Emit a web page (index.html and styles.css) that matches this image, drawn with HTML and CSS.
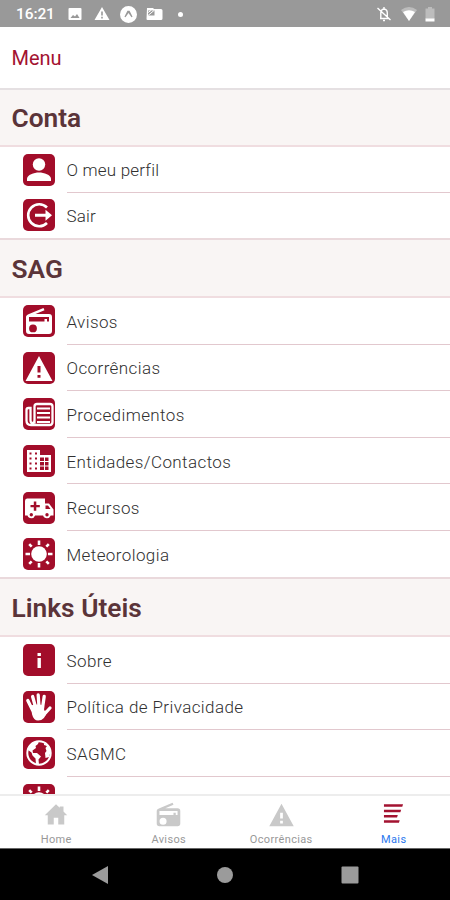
FILE: index.html
```html
<!DOCTYPE html>
<html lang="pt">
<head>
<meta charset="utf-8">
<title>Menu</title>
<link rel="stylesheet" href="styles.css">
</head>
<body>
<svg class="defs" aria-hidden="true">
  <symbol id="person" viewBox="0 0 32 32"><circle cx="16" cy="10.5" r="6.2"/><path d="M4 27v-2.2c0-4 7-6.3 12-6.3s12 2.3 12 6.3V27z"/></symbol>
  <symbol id="exit" viewBox="0 0 32 32"><path d="M24 8.500A11 11 0 1 0 24 24" fill="none" stroke="currentColor" stroke-width="2.600"/><path d="M12 14.800h10.500v-4l6.500 5.500-6.500 5.500v-4H12z"/></symbol>
  <symbol id="radio" viewBox="0 0 32 32"><path fill-rule="evenodd" d="M6 9 20.500 3l1 2.300L12.500 9H26a3 3 0 0 1 3 3V26a3 3 0 0 1-3 3H6a3 3 0 0 1-3-3V12c0-1.500 1.500-2.500 3-3zM6 12v4.500h15.500V14H24v2.500h2V12zM10 19.500a3.900 3.900 0 1 0 0 7.800 3.900 3.900 0 0 0 0-7.800z"/></symbol>
  <symbol id="warning" viewBox="0 0 32 32"><path fill-rule="evenodd" d="M16 4 29.500 29h-27zM14.500 14v6.500h3V14zM14.500 23v2.800h3V23z"/></symbol>
  <symbol id="news" viewBox="0 0 32 32"><g fill="none" stroke="currentColor"><path d="M11.500 25.500V8.500q0-2.500 2.500-2.500h13q2.500 0 2.500 2.500V24q0 3-3 3H8q-4.500 0-4.500-4.500V12q0-2 2-2h2v12q0 3 2 3t2-3" stroke-width="2.300"/><path d="M14 10.500h13M14 15h13M14 19.500h13M14 24h13" stroke-width="2"/></g></symbol>
  <symbol id="building" viewBox="0 0 32 32"><path fill-rule="evenodd" d="M4 5h13v5h11v17H4zM6.500 7.500v2h2v-2zM12 7.500v2h2v-2zM6.500 12.500v2h2v-2zM12 12.500v2h2v-2zM6.500 17.500v2h2v-2zM12 17.500v2h2v-2zM6.500 22.500v2h2v-2zM12 22.500v2h2v-2zM17 12.500v3.500h4v-3.500zM22 12.500v3.500h3.500v-3.500zM17 17v3.500h4V17zM22 17v3.500h3.500V17zM17 21.500v3.500h4v-3.500zM22 21.500v3.500h3.500v-3.500z"/></symbol>
  <symbol id="ambulance" viewBox="0 0 32 32"><path fill-rule="evenodd" d="M4 6.500h18v5h4l4.500 6v6h-2.800a4 4 0 0 1-7.600 0h-8a4 4 0 0 1-7.600 0H2V9q0-2.500 2-2.500zM10.800 9.500V13H7.500v2.300h3.300v3.500h2.500v-3.500h3.500V13h-3.500V9.500zM22.500 13.500V17h5l-2.500-3.500zM8.300 21a1.600 1.600 0 1 0 0 3.400 1.600 1.600 0 0 0 0-3.400zM24 21a1.600 1.600 0 1 0 0 3.400 1.600 1.600 0 0 0 0-3.400z"/></symbol>
  <symbol id="sun" viewBox="0 0 32 32"><circle cx="16" cy="16" r="7.800"/><path d="M16 2.500v4.500M16 25v4.500M2.500 16H7M25 16h4.500M6.200 6.200l2.500 2.500M23.300 23.300l2.500 2.500M6.200 25.800l2.500-2.500M23.300 8.700l2.500-2.500" stroke="currentColor" stroke-width="2.600"/></symbol>
  <symbol id="info" viewBox="0 0 32 32"><path d="M14.500 9h3.400v3h-3.400zM14.500 14h3.400v10h-3.400z"/></symbol>
  <symbol id="hand" viewBox="0 0 32 32"><g fill="none" stroke="currentColor" stroke-width="3.300" stroke-linecap="round"><path d="M9.500 19 4.800 9.500M12.500 16 9.600 5.500M16 16 15.200 4M19.500 17l1.700-11.500M21.500 23l5.500-6"/></g><path d="M7.500 14.500q7-2 13.600 0v5l3 .5q-2 9.500-9 9.500-4.500 0-6-6z"/></symbol>
  <symbol id="globe" viewBox="0 0 32 32"><circle cx="16" cy="16" r="11.700" fill="none" stroke="currentColor" stroke-width="2"/><path d="M5 13q2-8 11-9l-1 3-2.500 2 .5 2-3.500 2.500.5 2.500h4l4 3.500-2.500 3 .5 5h-3l-.5-6-3-3-1-3zM21 6q6 3 6.500 9l-1.500 5-3.500 1-.5-5 1.500-2-1-3 1.500-2-3-1z"/></symbol>
  <symbol id="home" viewBox="0 0 32 32"><path d="M1 17.500 16 3l5 4.800V6h5v6.600l5 4.900h-4V30h-8v-9h-6v9H5V17.500z"/></symbol>
</svg>
<div class="screen">
  <div class="status">
    <div class="status-left">
      <span class="clock">16:21</span>
      <svg class="s-img" viewBox="0 0 14 14"><path fill-rule="evenodd" d="M1.500 1h11q1 0 1 1v10q0 1-1 1h-11q-1 0-1-1V2q0-1 1-1zM2.500 11h9L9 7l-2 2.500L5 8z"/></svg>
      <svg class="s-warn" viewBox="0 0 16 14"><path fill-rule="evenodd" d="M8 0l7.500 13H.5zM7.200 4.500v4h1.600v-4zM7.200 9.800v1.600h1.600V9.800z"/></svg>
      <svg class="s-expo" viewBox="0 0 16 16"><path fill-rule="evenodd" d="M8 0a8 8 0 1 1 0 16A8 8 0 0 1 8 0zM7 4.500 4.200 10l1 .7L8 6.500l2.800 4.200 1-.7L9 4.500z"/></svg>
      <svg class="s-card" viewBox="0 0 17 14"><path fill-rule="evenodd" d="M1 1h6l1 1h7q1.500 0 1.500 1.500v8q0 1.500-1.500 1.500H1.500Q.5 13 .5 12zM2 3.500v5h6.500v-5z"/><path d="m2 8.500 6-5M2 5.500 5 3.500" stroke="#fff"/></svg>
      <span class="dot"></span>
    </div>
    <div class="status-right">
      <svg class="s-bell" viewBox="0 0 16 16"><path d="M4 12.500h9M4.800 12V7q0-3.500 3.200-4 3.300.5 3.300 4v5M8 1v2M7 14.500h2M1.500 2l13 12" fill="none" stroke="#fff" stroke-width="1.400"/></svg>
      <svg class="s-wifi" viewBox="0 0 16 14"><path opacity=".35" d="M0 3q8-6 16 0L8 14z"/><path d="M2 5q6-3.500 12 0l-6 9z"/></svg>
      <svg class="s-bat" viewBox="0 0 10 15"><path opacity=".35" d="M3 0h4v1.500h2.500V12h-9V1.500H3z"/><path d="M.5 11.500h9v3h-9z"/></svg>
    </div>
  </div>
  <header class="title">Menu</header>
  <main class="menu">
    <h2 class="h-conta">Conta</h2>
    <ul class="list-conta">
      <li><svg class="tile"><use href="#person"/></svg><span class="label tight">O meu perfil</span></li>
      <li><svg class="tile"><use href="#exit"/></svg><span class="label tight">Sair</span></li>
    </ul>
    <h2>SAG</h2>
    <ul>
      <li><svg class="tile"><use href="#radio"/></svg><span class="label">Avisos</span></li>
      <li><svg class="tile"><use href="#warning"/></svg><span class="label">Ocorrências</span></li>
      <li><svg class="tile"><use href="#news"/></svg><span class="label">Procedimentos</span></li>
      <li><svg class="tile"><use href="#building"/></svg><span class="label">Entidades/Contactos</span></li>
      <li><svg class="tile"><use href="#ambulance"/></svg><span class="label">Recursos</span></li>
      <li><svg class="tile"><use href="#sun"/></svg><span class="label">Meteorologia</span></li>
    </ul>
    <h2>Links Úteis</h2>
    <ul>
      <li><svg class="tile"><use href="#info"/></svg><span class="label">Sobre</span></li>
      <li><svg class="tile"><use href="#hand"/></svg><span class="label">Política de Privacidade</span></li>
      <li><svg class="tile"><use href="#globe"/></svg><span class="label">SAGMC</span></li>
      <li><svg class="tile"><use href="#sun"/></svg><span class="label"></span></li>
    </ul>
  </main>
  <nav class="tabs">
    <div class="tab"><svg class="t-home"><use href="#home"/></svg><span>Home</span></div>
    <div class="tab"><svg class="t-radio"><use href="#radio"/></svg><span>Avisos</span></div>
    <div class="tab"><svg class="t-warn"><use href="#warning"/></svg><span>Ocorrências</span></div>
    <div class="tab active"><svg class="t-more" viewBox="0 0 22 22"><path d="M1 1.200h20l-.8 2.800H1zM1 7h18l-.8 2.600H1zM1 12.500h14.500l-.8 2.600H1zM1 18h16.500l-.8 2.600H1z"/></svg><span>Mais</span></div>
  </nav>
  <div class="system">
    <svg viewBox="0 0 18 20"><path d="M17 1v18L1 10z"/></svg>
    <svg viewBox="0 0 18 20"><circle cx="9" cy="10" r="8"/></svg>
    <svg viewBox="0 0 18 20"><rect x=".5" y="1.500" width="17" height="17" rx="1"/></svg>
  </div>
</div>
</body>
</html>
```
FILE: styles.css
```css
* { box-sizing: border-box; }
body { margin: 0; font-family: Roboto, "Liberation Sans", sans-serif; background: #fff; }
.defs { display: none; }
svg { display: block; fill: currentColor; flex: none; }
.screen { width: 450px; height: 900px; display: flex; flex-direction: column; overflow: hidden; }

.status { height: 27px; flex: none; background: #999; color: #fff; display: flex; justify-content: space-between; align-items: center; padding: 1px 15px 0 16px; }
.status-left, .status-right { display: flex; align-items: center; }
.clock { width: 52px; font-size: 15.5px; font-weight: 500; line-height: 26px; letter-spacing: -.1px; }
.s-img { width: 14px; height: 14px; margin-right: 12px; }
.s-warn { width: 16px; height: 14px; margin-right: 10px; }
.s-expo { width: 17px; height: 17px; margin-right: 9px; }
.s-card { width: 17px; height: 14px; margin-right: 15px; }
.dot { width: 5px; height: 5px; border-radius: 50%; background: #fff; }
.s-bell { width: 16px; height: 16px; margin-right: 9px; }
.s-wifi { width: 16px; height: 14px; margin-right: 8px; }
.s-bat { width: 10px; height: 15px; }

.title { height: 61px; flex: none; padding-left: 11.5px; font-size: 20px; line-height: 63px; color: #a31230; }

.menu { flex: 1; min-height: 0; overflow: hidden; }
h2 { margin: 0; height: 60px; padding-left: 11.5px; background: #f9f5f4; border-top: 2px solid #ead9dc; border-bottom: 2px solid #f0dde0; font-size: 26.3px; line-height: 59px; font-weight: 600; color: #5b3439; }
.h-conta { height: 59px; border-top-color: #e5e0e2; line-height: 56px; }
ul { margin: 0; padding: 0; list-style: none; }
li { height: 46.6px; display: flex; align-items: center; padding-left: 23px; }
ul:not(.list-conta) { height: 279px; }
.list-conta { height: 91px; }
.list-conta li { height: 45.5px; }
.tile { width: 32px; height: 32px; border-radius: 5px; background: #a20d2a; color: #fff; margin-right: 11.5px; }
.label { flex: 1; height: 100%; display: flex; align-items: center; padding-top: 2px; border-bottom: 1px solid #e2c8ce; font-size: 17px; font-weight: 300; color: #303030; letter-spacing: .4px; white-space: nowrap; }
.label.tight { letter-spacing: .2px; }
li:last-child .label { border-bottom: 0; }

.tabs { height: 54px; flex: none; border-top: 2px solid #ededed; display: flex; align-items: stretch; }
.tab { width: 112.5px; display: flex; flex-direction: column; align-items: center; justify-content: flex-end; color: #c9c9c9; }
.tab svg { width: 29px; height: 29px; margin-bottom: 4px; }
.tab span { font-size: 11px; line-height: 13px; color: #989898; letter-spacing: .35px; padding-bottom: 2px; }
.tab .t-home { width: 24px; height: 24px; margin-bottom: 7px; }
.tab.active { color: #a31230; }
.tab.active span { color: #2b78ee; }
.tab .t-more { width: 21px; height: 21px; margin-bottom: 9px; }

.system { height: 52px; flex: none; background: #000; border-top: 1px solid #666; display: flex; justify-content: space-between; align-items: center; padding: 0 91px; color: #9b9b9b; }
.system svg { width: 18px; height: 20px; }
```
